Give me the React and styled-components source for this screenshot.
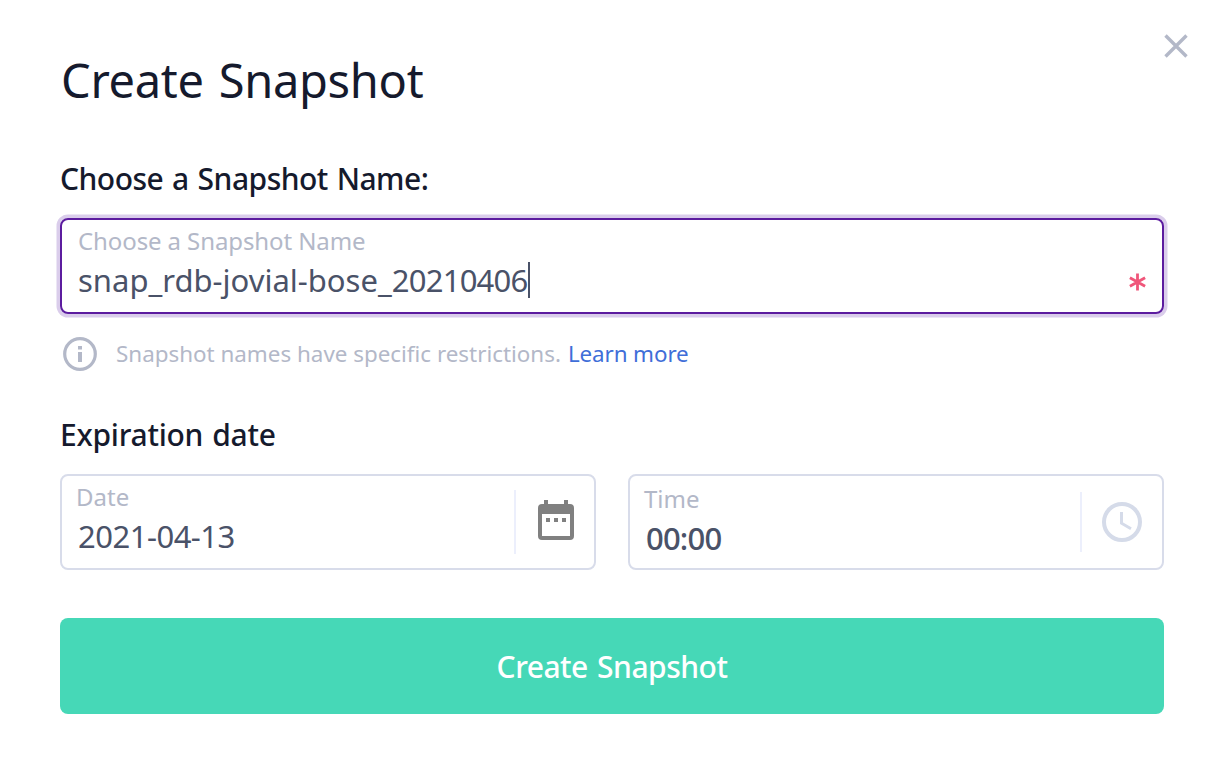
import React from "react";
import styled, { createGlobalStyle } from "styled-components";

const GlobalStyle = createGlobalStyle`
  *, *::before, *::after { box-sizing: border-box; }
  body {
    margin: 0;
    background: #fff;
    font-family: "Noto Sans", "Open Sans", sans-serif;
    color: #151a2d;
  }
  h1, h2, p { margin: 0; }
  button { font: inherit; border: 0; padding: 0; cursor: pointer; }
  svg { display: block; }
`;

const Dialog = styled.main`
  position: relative;
  width: 1212px;
  height: 764px;
  padding: 49px 48px 50px 60px;
  display: flex;
  flex-direction: column;
  background: #fff;
`;

const CloseButton = styled.button`
  position: absolute;
  top: 34px;
  right: 24px;
  width: 24px;
  height: 24px;
  background: none;
`;

const Title = styled.h1`
  padding-left: 1px;
  font-size: 47px;
  line-height: 62px;
  font-weight: 400;
  letter-spacing: -0.3px;
  word-spacing: 3px;
  white-space: nowrap;
`;

const SectionTitle = styled.h2`
  margin-top: ${(p) => p.$top}px;
  font-size: 30px;
  line-height: 40px;
  font-weight: 500;
  letter-spacing: ${(p) => p.$tracking}px;
  word-spacing: 1.5px;
  white-space: nowrap;
`;

const Field = styled.div`
  display: flex;
  align-items: center;
  height: 96px;
  width: 100%;
  border-radius: 8px;
  border: 2px solid ${(p) => (p.$focused ? "#5c1c9f" : "#d8dcea")};
  box-shadow: ${(p) => (p.$focused ? "0 0 0 3.5px #dacdeb" : "none")};
`;

const FieldText = styled.div`
  flex: 1;
  align-self: stretch;
  padding: ${(p) => p.$top}px 0 0 16px;
  white-space: nowrap;
`;

const Label = styled.div`
  margin-left: ${(p) => p.$shift || 0}px;
  font-size: 24px;
  line-height: 32px;
  color: #b3b8c8;
  letter-spacing: ${(p) => p.$tracking || 0}px;
`;

const Value = styled.div`
  display: flex;
  align-items: center;
  margin-top: 3px;
  height: 40px;
  font-size: 31px;
  font-weight: ${(p) => p.$weight || 400};
  color: #4a5268;
  letter-spacing: ${(p) => p.$tracking}px;
`;

const Digits = styled.span`
  letter-spacing: -0.75px;
`;

const Caret = styled.span`
  width: 2px;
  height: 36px;
  background: #4a5268;
`;

const Required = styled.span`
  padding: 32px 16px 0 0;
`;

const Hint = styled.div`
  display: flex;
  align-items: center;
  height: 36px;
  margin-top: 22px;
  padding-left: 2px;
  font-size: 22.4px;
  color: #b3b8c8;
  white-space: nowrap;
`;

const HintText = styled.p`
  margin: -2px 0 0 18px;
`;

const Link = styled.a`
  margin: -2px 0 0 7px;
  color: #3f6ed8;
  letter-spacing: -0.1px;
`;

const FieldRow = styled.div`
  display: grid;
  grid-template-columns: 1fr 1fr;
  gap: 32px;
  margin-top: 19px;
`;

const Divider = styled.span`
  width: 2px;
  height: ${(p) => p.$height}px;
  background: #eceffc;
`;

const IconCell = styled.span`
  width: ${(p) => p.$width}px;
  padding: 0 0 ${(p) => p.$lift || 0}px ${(p) => p.$inset || 0}px;
  display: flex;
  justify-content: center;
`;

const SubmitButton = styled.button`
  margin-top: 48px;
  height: 96px;
  flex: none;
  border-radius: 8px;
  background: #46d8b7;
  color: #fff;
  && {
    font-size: 30px;
    font-weight: 500;
    letter-spacing: -0.5px;
    word-spacing: 2px;
  }
`;

const NameField = styled.div`
  margin-top: 19px;
`;

export default function App() {
  return (
    <>
      <GlobalStyle />
      <Dialog>
        <CloseButton aria-label="Close">
          <svg width="24" height="24" viewBox="0 0 24 24" fill="none" stroke="#b3b8c8" strokeWidth="3.4">
            <path d="M1.5 1.5 22.5 22.5M22.5 1.5 1.5 22.5" />
          </svg>
        </CloseButton>
        <Title>Create Snapshot</Title>
        <SectionTitle $top={48} $tracking={-0.5}>Choose a Snapshot Name:</SectionTitle>
        <NameField>
          <Field $focused>
            <FieldText $top={5}>
              <Label $tracking={-0.1}>Choose a Snapshot Name</Label>
              <Value $tracking={0}>
                snap_rdb-jovial-bose_<Digits>20210406</Digits>
                <Caret />
              </Value>
            </FieldText>
            <Required>
              <svg width="17" height="18" viewBox="0 0 17 18" fill="none" stroke="#f0567a" strokeWidth="2.8">
                <path d="M8.5 .5v17M.9 4.7l15.2 8.6M16.1 4.7.9 13.3" />
              </svg>
            </Required>
          </Field>
        </NameField>
        <Hint>
          <svg width="36" height="36" viewBox="0 0 36 36">
            <circle cx="18" cy="18" r="15.3" fill="none" stroke="#b3b8c8" strokeWidth="3.2" />
            <path d="M16 10h4v3.4h-4zM16 16h4v10h-4z" fill="#b3b8c8" />
          </svg>
          <HintText>Snapshot names have specific restrictions.</HintText>
          <Link>Learn more</Link>
        </Hint>
        <SectionTitle $top={43} $tracking={-0.25}>Expiration date</SectionTitle>
        <FieldRow>
          <Field>
            <FieldText $top={5}>
              <Label $shift={-2}>Date</Label>
              <Value $tracking={-0.5}>2021-04-13</Value>
            </FieldText>
            <Divider $height={64} />
            <IconCell $width={78} $lift={4} $inset={2}>
              <svg width="36" height="40" viewBox="0 0 36 40" fill="#808080">
                <path
                  fillRule="evenodd"
                  d="M6 0h4v4h16V0h4v4h2a4 4 0 0 1 4 4v28a4 4 0 0 1-4 4H4a4 4 0 0 1-4-4V8a4 4 0 0 1 4-4h2zM4 14v22h28V14z"
                />
                <path d="M8 18h4v4H8zM16 18h4v4h-4zM24 18h4v4h-4z" />
              </svg>
            </IconCell>
          </Field>
          <Field>
            <FieldText $top={7}>
              <Label $shift={-2}>Time</Label>
              <Value $weight={500} $tracking={-0.8}>00:00</Value>
            </FieldText>
            <Divider $height={60} />
            <IconCell $width={80}>
              <svg width="40" height="40" viewBox="0 0 40 40" fill="none" stroke="#d5dbe9">
                <circle cx="20" cy="20" r="18" strokeWidth="4" />
                <path d="M19.5 10v11.2l9.5 5.6" strokeWidth="3" />
              </svg>
            </IconCell>
          </Field>
        </FieldRow>
        <SubmitButton>Create Snapshot</SubmitButton>
      </Dialog>
    </>
  );
}
